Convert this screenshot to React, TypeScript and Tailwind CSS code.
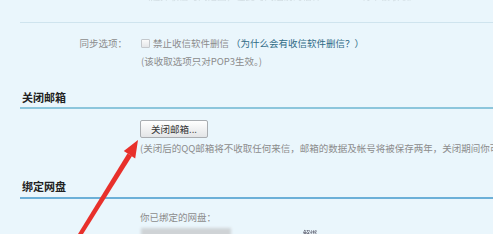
import React from "react";

export default function App() {
  const font = { fontFamily: '"Noto Sans CJK SC", "Noto Sans", sans-serif' };
  return (
    <div
      className="relative h-[234px] w-[493px] overflow-hidden bg-[#eaf6fc] text-[9.5px] leading-[14px] text-[#8c8c8c]"
      style={font}
    >
      {/* faint cut-off text at top */}
      <div className="-mt-[11px] flex h-[33px] gap-[40px] pl-[141px] text-[#d3dee3] blur-[0.6px]">
        <span>（选择收信时间范围，在此时间之前的信件</span>
        <span>将不被收取）</span>
      </div>
      <div className="ml-[20px] h-px bg-[#cfe4ee]" />

      {/* sync options */}
      <div className="mt-[13px] flex">
        <div className="w-[127px] text-right">同步选项：</div>
        <div className="ml-[14px] flex flex-col gap-[4px]">
          <div className="flex items-center">
            <span className="mr-[3px] inline-block h-[9px] w-[9px] rounded-[1px] border border-[#c4c8cc] bg-gradient-to-b from-[#fafafa] to-[#e4e6e8]" />
            <span>禁止收信软件删信</span>
            <span className="ml-[2px] text-[#2f6b86]">（为什么会有收信软件删信？）</span>
          </div>
          <div>(该收取选项只对POP3生效。)</div>
        </div>
      </div>

      {/* close mailbox */}
      <div className="mt-[22px] pl-[22px] text-[11px] font-bold text-[#222]">关闭邮箱</div>
      <div className="ml-[20px] mt-[3px] h-[2px] bg-[#8cc6dc]" />
      <div className="mt-[11px] pl-[140px]">
        <button className="flex h-[18px] w-[68px] items-center justify-center rounded-[2px] border border-[#a9adb1] bg-gradient-to-b from-[#ffffff] to-[#e3e5e7] text-[9.5px] text-[#333]">
          关闭邮箱...
        </button>
      </div>
      <div className="mt-[3px] whitespace-nowrap pl-[140px]">
        (关闭后的QQ邮箱将不收取任何来信，邮箱的数据及帐号将被保存两年，关闭期间你可以随时开启)
      </div>

      {/* bind netdisk */}
      <div className="mt-[24px] pl-[22px] text-[11px] font-bold text-[#222]">绑定网盘</div>
      <div className="ml-[20px] mt-[4px] h-[2px] bg-[#6cb0d8]" />
      <div className="mt-[11px] pl-[140px]">你已绑定的网盘：</div>
      <div className="mt-[4px] flex items-start pl-[141px]">
        <div className="h-[14px] w-[90px] bg-[#cfd3d6] blur-[1.5px]" />
        <span className="ml-[72px] -mt-[2px] text-[7px] text-[#556] blur-[0.5px]">解绑</span>
      </div>

      {/* red arrow annotation */}
      <svg className="pointer-events-none absolute left-0 top-0" width="493" height="234" viewBox="0 0 493 234">
        <polygon points="78,234 83,234 132,156 127.5,153.5" fill="#e8302b" />
        <polygon points="138,140 135.2,158.5 123.8,151" fill="#e8302b" />
      </svg>
    </div>
  );
}
